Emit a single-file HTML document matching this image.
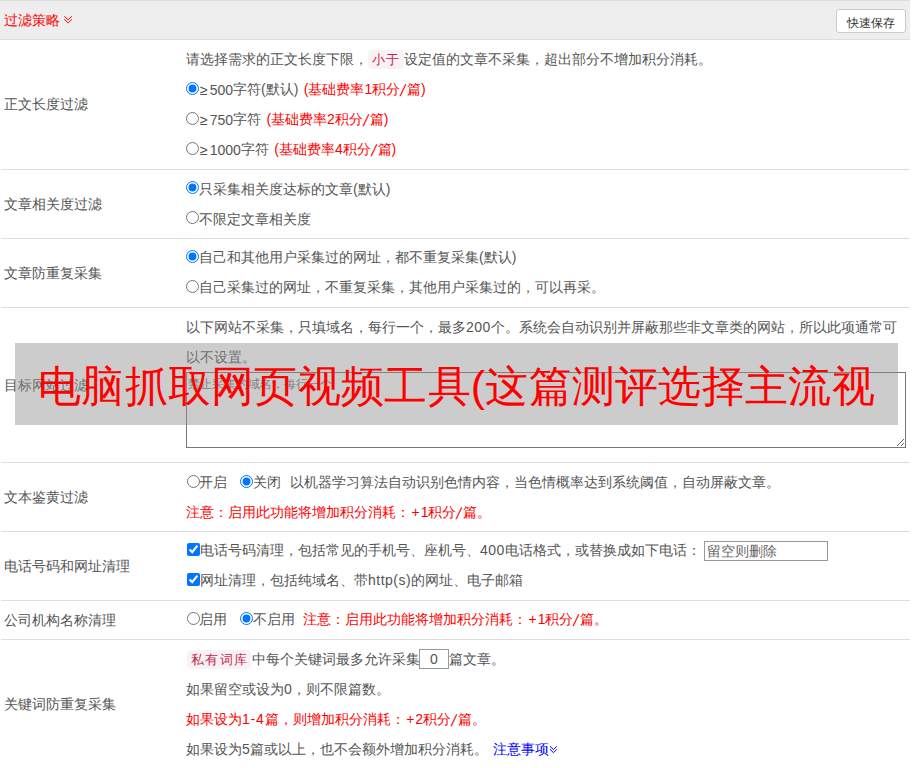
<!DOCTYPE html>
<html><head><meta charset="utf-8">
<style>
html,body{margin:0;padding:0;background:#fff;width:912px;height:768px;overflow:hidden;position:relative;font-family:"Liberation Sans",sans-serif;}
.t{position:absolute;font-size:14px;line-height:20px;white-space:nowrap;color:#555;}
.r{color:#f00;}
.ws{word-spacing:1.5px;}
.sl{display:inline-block;padding:0 1.5px;transform:translate(-0.5px,1.5px) scale(1.15,1.15) skewX(-12deg);}
.lt{letter-spacing:0.5px;}
.pl{margin-left:1.5px;letter-spacing:1px;}
.hl{position:absolute;left:1px;width:909px;height:1px;background:#ddd;}
.rd{position:absolute;margin:0;width:13px;height:13px;}
.code{position:absolute;background:#f9f2f4;color:#c7254e;border-radius:4px;font-size:12.6px;line-height:21px;height:19px;letter-spacing:1.4px;text-indent:0;box-sizing:border-box;padding-left:4px;}
.inp{position:absolute;box-sizing:border-box;border:1px solid #999;background:#fff;font-size:14px;color:#777;line-height:18px;}
</style></head><body>
<!-- header -->
<div style="position:absolute;left:0;top:0;width:910px;height:39px;background:#eee;border-top:1px solid #ddd;"></div>
<div class="hl" style="top:39px;left:0;width:910px"></div>
<div class="t r" style="left:4px;top:10px">过滤策略</div>
<svg style="position:absolute;left:63px;top:15px" width="11" height="10" viewBox="0 0 11 10"><path d="M1.3 1.3 L5.2 4.8 L8.9 1.3 M1.3 4.4 L5.2 7.9 L8.9 4.4" stroke="#f00" stroke-width="1" fill="none"/></svg>
<div style="position:absolute;left:836px;top:9px;width:70px;height:24px;box-sizing:border-box;border:1px solid #ccc;border-radius:3px;background:#fff;"></div>
<div class="t" style="left:847px;top:13px;font-size:12px;color:#333">快速保存</div>

<!-- row borders -->
<div class="hl" style="top:169px"></div>
<div class="hl" style="top:238px"></div>
<div class="hl" style="top:307px"></div>
<div class="hl" style="top:462px"></div>
<div class="hl" style="top:531px"></div>
<div class="hl" style="top:600px"></div>
<div class="hl" style="top:639px"></div>

<!-- labels -->
<div class="t" style="left:4px;top:94px">正文长度过滤</div>
<div class="t" style="left:4px;top:194px">文章相关度过滤</div>
<div class="t" style="left:4px;top:263px">文章防重复采集</div>
<div class="t" style="left:4px;top:375px">目标网站过滤</div>
<div class="t" style="left:4px;top:487px">文本鉴黄过滤</div>
<div class="t" style="left:4px;top:556px">电话号码和网址清理</div>
<div class="t" style="left:4px;top:610px">公司机构名称清理</div>
<div class="t" style="left:4px;top:694px">关键词防重复采集</div>

<!-- row 1 -->
<div class="t" style="left:186px;top:49px">请选择需求的正文长度下限，</div>
<div class="code" style="left:368px;top:50px;width:36px">小于</div>
<div class="t" style="left:404px;top:49px">设定值的文章不采集，超出部分不增加积分消耗。</div>
<input type="radio" class="rd" checked style="left:186px;top:82px">
<div class="t ws" style="left:200px;top:79px"><span style="position:relative;top:1px"><span style="letter-spacing:2px">≥</span>500</span>字符(默认) <span class="r">(基础费率1积分<span class="sl">/</span>篇)</span></div>
<input type="radio" class="rd" style="left:186px;top:112px">
<div class="t ws" style="left:200px;top:109px"><span style="position:relative;top:1px"><span style="letter-spacing:2px">≥</span>750</span>字符 <span class="r">(基础费率2积分<span class="sl">/</span>篇)</span></div>
<input type="radio" class="rd" style="left:186px;top:142px">
<div class="t ws" style="left:200px;top:139px"><span style="position:relative;top:1px"><span style="letter-spacing:2px">≥</span>1000</span>字符 <span class="r">(基础费率4积分<span class="sl">/</span>篇)</span></div>

<!-- row 2 -->
<input type="radio" class="rd" checked style="left:186px;top:181px">
<div class="t" style="left:199px;top:179px">只采集相关度达标的文章(默认)</div>
<input type="radio" class="rd" style="left:186px;top:211px">
<div class="t" style="left:199px;top:209px">不限定文章相关度</div>

<!-- row 3 -->
<input type="radio" class="rd" checked style="left:186px;top:250px">
<div class="t" style="left:199px;top:247px">自己和其他用户采集过的网址，都不重复采集(默认)</div>
<input type="radio" class="rd" style="left:186px;top:280px">
<div class="t" style="left:199px;top:277px">自己采集过的网址，不重复采集，其他用户采集过的，可以再采。</div>

<!-- row 4 -->
<div class="t" style="left:186px;top:317px">以下网站不采集，只填域名，每行一个，最多<span class="lt">200</span>个。系统会自动识别并屏蔽那些非文章类的网站，所以此项通常可</div>
<div class="t" style="left:186px;top:347px">以不设置。</div>
<textarea style="position:absolute;left:186px;top:372px;width:720px;height:76px;box-sizing:border-box;margin:0;border:1px solid #777;resize:both;font-family:inherit;font-size:12px;line-height:16px;padding:3px 1px;" placeholder="禁止采集的域名，每行一个"></textarea>

<!-- row 5 -->
<input type="radio" class="rd" style="left:187px;top:475px">
<div class="t" style="left:199px;top:472px">开启</div>
<input type="radio" class="rd" checked style="left:240px;top:475px">
<div class="t" style="left:253px;top:472px">关闭</div>
<div class="t" style="left:290px;top:472px">以机器学习算法自动识别色情内容，当色情概率达到系统阈值，自动屏蔽文章。</div>
<div class="t r" style="left:186px;top:502px">注意：启用此功能将增加积分消耗：<span class="pl">+</span>1积分<span class="sl">/</span>篇。</div>

<!-- row 6 -->
<input type="checkbox" class="rd" checked style="left:187px;top:543px">
<div class="t" style="left:200px;top:540px">电话号码清理，包括常见的手机号、座机号、<span class="lt">400</span>电话格式，或替换成如下电话：</div>
<div class="inp" style="left:704px;top:541px;width:124px;height:20px;"></div>
<div class="t" style="left:707px;top:541px;color:#666">留空则删除</div>
<input type="checkbox" class="rd" checked style="left:187px;top:573px">
<div class="t" style="left:200px;top:570px">网址清理，包括纯域名、带<span class="lt">http(s)</span>的网址、电子邮箱</div>

<!-- row 7 -->
<input type="radio" class="rd" style="left:187px;top:612px">
<div class="t" style="left:199px;top:609px">启用</div>
<input type="radio" class="rd" checked style="left:240px;top:612px">
<div class="t" style="left:253px;top:609px">不启用</div>
<div class="t r" style="left:303px;top:609px">注意：启用此功能将增加积分消耗：<span class="pl">+</span>1积分<span class="sl">/</span>篇。</div>

<!-- row 8 -->
<div class="code" style="left:187px;top:650px;width:64px">私有词库</div>
<div class="t" style="left:252px;top:649px">中每个关键词最多允许采集</div>
<div class="inp" style="left:419px;top:649px;width:30px;height:20px;"></div>
<div class="t" style="left:430px;top:649px">0</div>
<div class="t" style="left:449px;top:649px">篇文章。</div>
<div class="t" style="left:186px;top:679px">如果留空或设为<span class="lt">0</span>，则不限篇数。</div>
<div class="t r" style="left:186px;top:709px">如果设为<span style="letter-spacing:0.8px">1-4</span>篇，则增加积分消耗：<span class="pl">+</span>2积分<span class="sl">/</span>篇。</div>
<div class="t" style="left:186px;top:739px">如果设为<span class="lt">5</span>篇或以上，也不会额外增加积分消耗。</div>
<div class="t" style="left:493px;top:739px;color:#00f">注意事项</div>
<svg style="position:absolute;left:548px;top:744px" width="10" height="10" viewBox="0 0 10 10"><path d="M2 2.3 L5.5 5.6 L8.8 2.3 M2 5.3 L5.5 8.7 L8.8 5.3" stroke="#00f" stroke-width="1" fill="none"/></svg>

<!-- overlay -->
<div style="position:absolute;left:15px;top:343px;width:883px;height:82px;background:rgba(142,142,142,0.45);"></div>
<div style="position:absolute;left:15px;top:345px;width:883px;height:82px;line-height:82px;text-align:center;color:#f00;font-size:43px;letter-spacing:0.27px;white-space:nowrap;">电脑抓取网页视频工具(这篇测评选择主流视</div>
</body></html>
